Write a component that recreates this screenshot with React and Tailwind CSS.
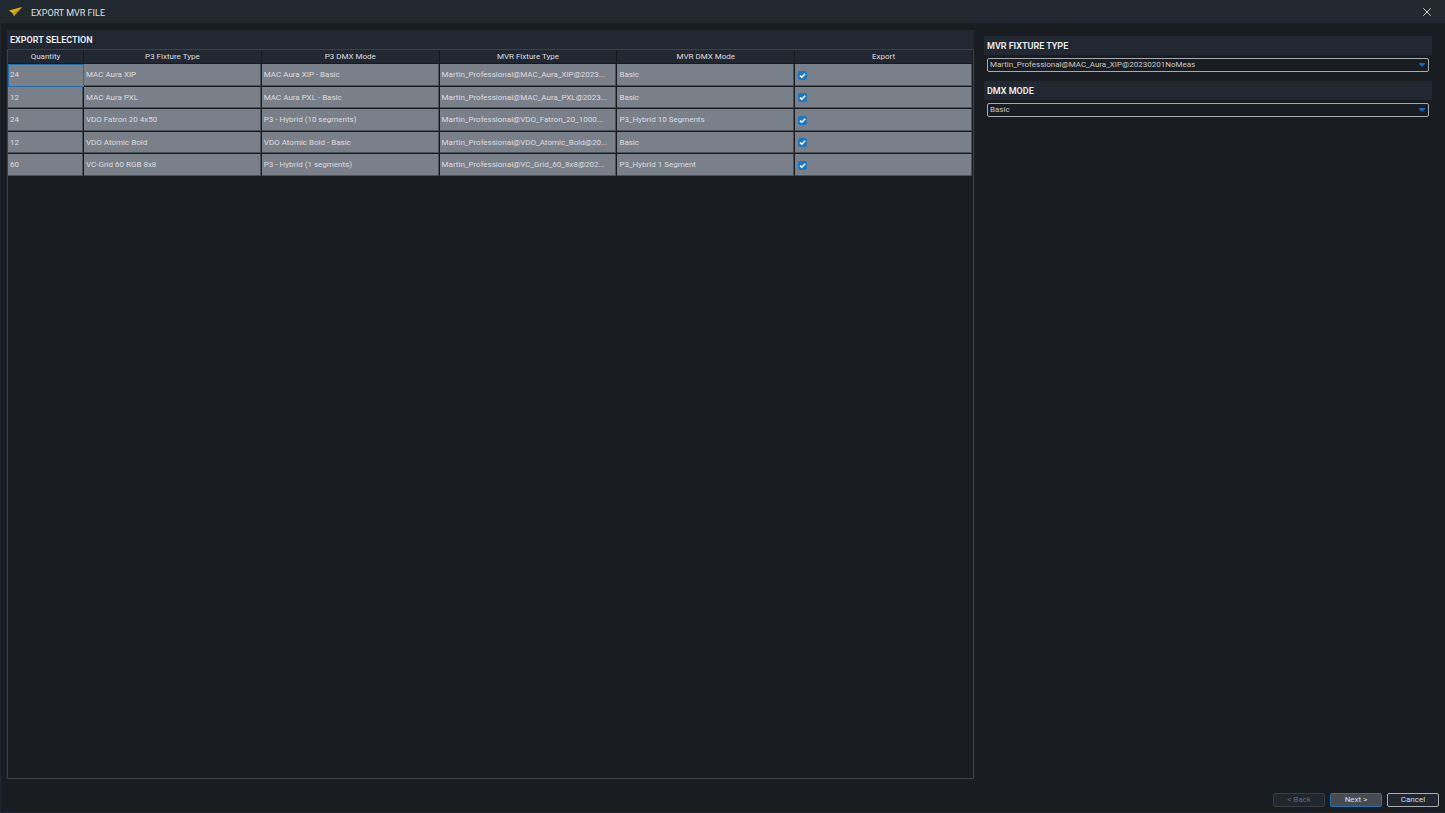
import React, { useState } from 'react';

const COLUMNS = ['Quantity', 'P3 Fixture Type', 'P3 DMX Mode', 'MVR Fixture Type', 'MVR DMX Mode', 'Export'];

const FIXTURES = [
  { qty: 24, type: 'MAC Aura XIP', mode: 'MAC Aura XIP - Basic', mvrType: 'Martin_Professional@MAC_Aura_XIP@2023...', mvrMode: 'Basic' },
  { qty: 12, type: 'MAC Aura PXL', mode: 'MAC Aura PXL - Basic', mvrType: 'Martin_Professional@MAC_Aura_PXL@2023...', mvrMode: 'Basic' },
  { qty: 24, type: 'VDO Fatron 20 4x50', mode: 'P3 - Hybrid (10 segments)', mvrType: 'Martin_Professional@VDO_Fatron_20_1000...', mvrMode: 'P3_Hybrid 10 Segments' },
  { qty: 12, type: 'VDO Atomic Bold', mode: 'VDO Atomic Bold - Basic', mvrType: 'Martin_Professional@VDO_Atomic_Bold@20...', mvrMode: 'Basic' },
  { qty: 60, type: 'VC-Grid 60 RGB 8x8', mode: 'P3 - Hybrid (1 segments)', mvrType: 'Martin_Professional@VC_Grid_60_8x8@202...', mvrMode: 'P3_Hybrid 1 Segment' },
];

function Cell({ children, active }) {
  return (
    <td className={`border-r border-b p-0 pl-[2px] whitespace-nowrap overflow-hidden ${active ? 'border-[#1d6fae] shadow-[inset_1px_1px_0_#1d6fae]' : 'border-[#171b1f] shadow-[inset_-1px_-1px_0_#4a5159]'}`}>
      {children}
    </td>
  );
}

function ExportCheck({ label, checked, onChange }) {
  return (
    <span className="grid size-[9px] ml-px">
      <input
        type="checkbox"
        aria-label={label}
        checked={checked}
        onChange={onChange}
        className="peer col-start-1 row-start-1 size-[9px] appearance-none rounded-[2px] border border-[#1c78c4] bg-[#262c34] checked:bg-[#1c78c4]"
      />
      <svg viewBox="0 0 9 9" className="col-start-1 row-start-1 size-[9px] pointer-events-none hidden peer-checked:block" fill="none" stroke="#fff" strokeWidth="1.5">
        <path d="M2 4.6 L3.8 6.3 L7.2 2.7" />
      </svg>
    </span>
  );
}

function SelectField({ id, label, options }) {
  return (
    <div className="mb-[9px]">
      <label htmlFor={id} className="block h-[19px] leading-[20px] pl-[3px] bg-[#222831] text-[9px] font-semibold text-[#eceef0]">{label}</label>
      <div className="relative mx-[3px] mt-[3px]">
        <select id={id} className="block w-full h-[14px] appearance-none rounded-[2px] border border-[#a7abaf] bg-[#191d21] pl-[2px] pr-4 text-[8px] leading-[12px] text-[#c6c9cc]">
          {options.map(o => <option key={o}>{o}</option>)}
        </select>
        <svg viewBox="0 0 6 4" className="absolute right-1 top-[5px] w-[6px] h-[4px] pointer-events-none" fill="#0b68d0">
          <path d="M0 0H6V1L3.5 3.5H2.5L0 1Z" />
        </svg>
      </div>
    </div>
  );
}

export default function App() {
  const [checked, setChecked] = useState(FIXTURES.map(() => true));

  const toggle = (index) => {
    setChecked(checked.map((value, i) => (i === index ? !value : value)));
  };

  return (
    <div className="flex flex-col h-screen bg-[#191d21] border-l border-b border-[#1f2730] font-['Roboto','Open_Sans',sans-serif] text-[8px] text-[#dcdee0]">
      <header className="flex items-center h-[23px] shrink-0 bg-[#222830] pl-2 pr-[14px]">
        <svg viewBox="0 0 13 9" className="w-[13px] h-[9px]">
          <path d="M0 3.5 L13 0 L5 9 L3.6 6.3 Z" fill="#dcb40c" />
          <path d="M3.6 6.3 L13 0 L5 9 Z" fill="#bf9c08" />
        </svg>
        <h1 className="ml-[9px] mt-[2px] text-[9px] leading-[14px] text-[#dfe1e3]">EXPORT MVR FILE</h1>
        <button aria-label="Close" className="ml-auto mt-px">
          <svg viewBox="0 0 8 8" className="size-2" stroke="#cfd1d3" strokeWidth="1">
            <path d="M0.3 0.3 L7.7 7.7 M7.7 0.3 L0.3 7.7" />
          </svg>
        </button>
      </header>

      <main className="flex flex-1 min-h-0 pt-[7px] pl-[6px] pr-[13px] gap-[10px]">
        <section className="flex flex-col flex-[967] min-w-0">
          <h2 className="h-[19px] leading-[20px] shrink-0 pl-[3px] bg-[#222831] text-[9px] font-semibold text-[#eceef0]">EXPORT SELECTION</h2>
          <div className="flex-1 border border-[#3e4246]">
            <table className="w-full table-fixed border-separate border-spacing-0 leading-[12px]">
              <colgroup>
                <col className="w-[76px]" />
                <col span={5} />
              </colgroup>
              <thead>
                <tr className="h-[14px]">
                  {COLUMNS.map(name => (
                    <th key={name} className="p-0 border-r border-b border-[#171b1f] bg-[#222831] font-normal text-center">{name}</th>
                  ))}
                </tr>
              </thead>
              <tbody>
                {FIXTURES.map((f, index) => (
                  <tr key={f.type} className="odd:h-[23px] even:h-[22px] bg-[#79808a]">
                    <Cell active={index === 0}>{f.qty}</Cell>
                    <Cell>{f.type}</Cell>
                    <Cell>{f.mode}</Cell>
                    <Cell>{f.mvrType}</Cell>
                    <Cell>{f.mvrMode}</Cell>
                    <Cell>
                      <ExportCheck label={`Export ${f.type}`} checked={checked[index]} onChange={() => toggle(index)} />
                    </Cell>
                  </tr>
                ))}
              </tbody>
            </table>
          </div>
        </section>

        <aside className="flex-[448] min-w-0 pt-[6px]">
          <SelectField id="fixture-type" label="MVR FIXTURE TYPE" options={['Martin_Professional@MAC_Aura_XIP@20230201NoMeas']} />
          <SelectField id="dmx-mode" label="DMX MODE" options={['Basic']} />
        </aside>
      </main>

      <footer className="flex justify-end gap-[5px] shrink-0 pt-[14px] pb-[5px] pr-[6px] leading-[12px]">
        <button disabled className="w-[52px] h-[14px] rounded-[2px] border border-[#363c43] bg-[#20262e] text-[#60666d]">&lt; Back</button>
        <button className="w-[52px] h-[14px] rounded-[2px] border border-[#2273b0] bg-[#464b51]">Next &gt;</button>
        <button className="w-[52px] h-[14px] rounded-[2px] border border-[#a7abaf] bg-[#20262e]">Cancel</button>
      </footer>
    </div>
  );
}
